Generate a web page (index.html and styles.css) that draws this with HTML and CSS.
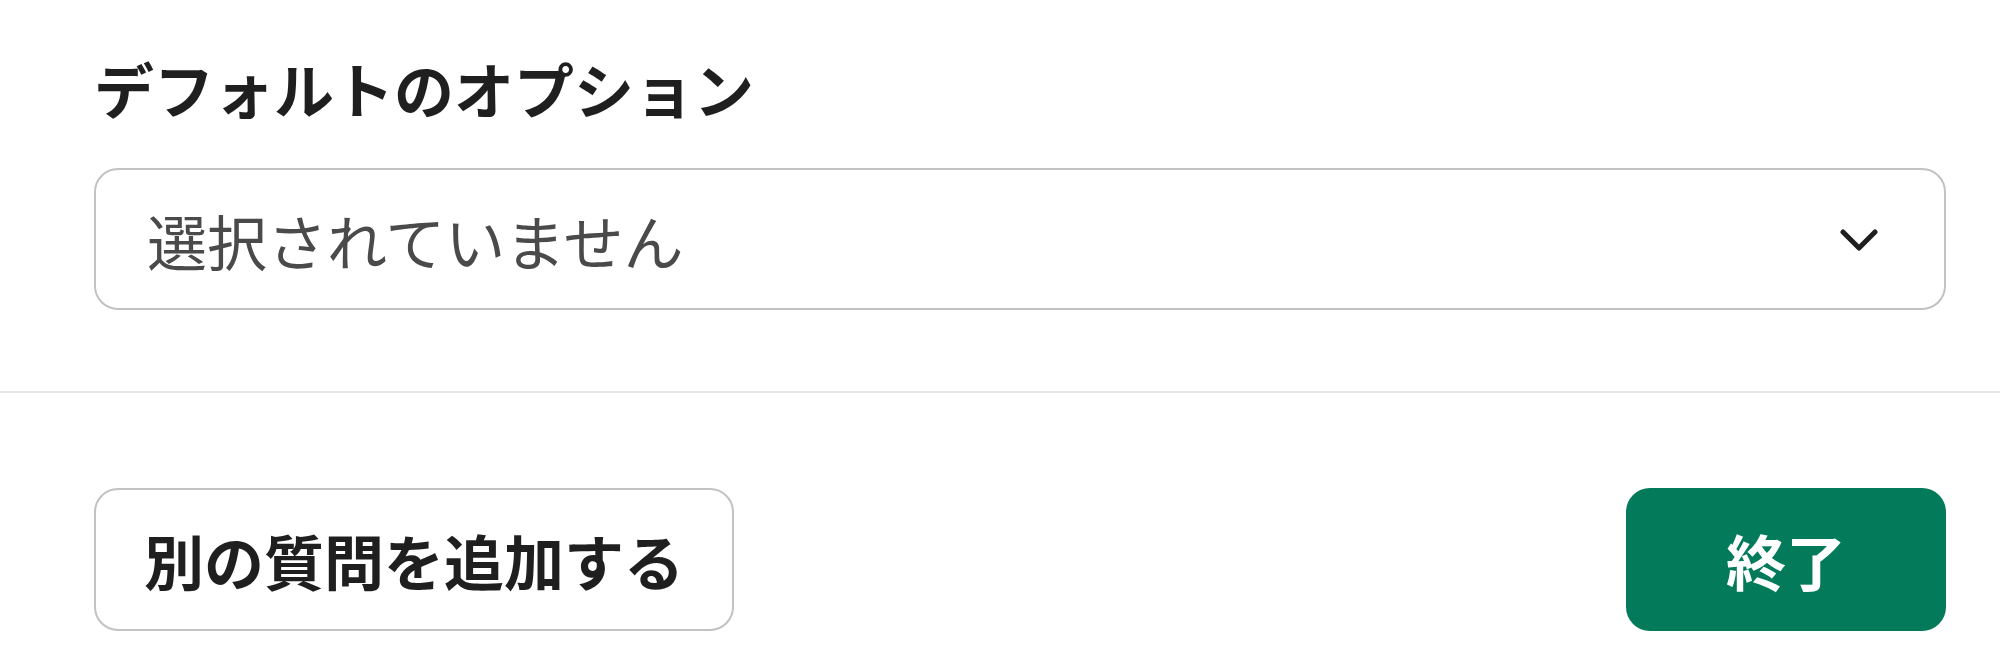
FILE: index.html
```html
<!DOCTYPE html>
<html lang="ja">
<head>
<meta charset="utf-8">
<title>デフォルトのオプション</title>
<link rel="stylesheet" href="styles.css">
</head>
<body>
  <section class="field">
    <div class="field-label">デフォルトのオプション</div>
    <div class="select">
      <span class="select-placeholder">選択されていません</span>
      <svg class="chevron" width="38" height="24" viewBox="0 0 38 24" aria-hidden="true">
        <path d="M3 4 L19 20 L35 4" fill="none" stroke="#1f1f1f" stroke-width="5" stroke-linecap="round" stroke-linejoin="round"/>
      </svg>
    </div>
  </section>
  <hr class="divider">
  <footer class="actions">
    <button class="btn btn-secondary" type="button">別の質問を追加する</button>
    <button class="btn btn-primary" type="button">終了</button>
  </footer>
</body>
</html>
```
FILE: styles.css
```css
html, body {
  margin: 0;
  padding: 0;
  background: #ffffff;
}

body {
  font-family: "Noto Sans CJK JP", "Noto Sans", sans-serif;
  color: #1f1f1f;
  width: 2000px;
  height: 671px;
  overflow: hidden;
}

.field {
  padding: 43px 54px 0 94px;
}

.field-label {
  font-size: 60px;
  line-height: 90px;
  font-weight: 700;
  color: #1f1f1f;
  margin-bottom: 35px;
}

.select {
  box-sizing: border-box;
  height: 142px;
  border: 2px solid #c2c2c2;
  border-radius: 24px;
  display: flex;
  align-items: center;
  justify-content: space-between;
  padding: 2px 66px 0 51px;
}

.select-placeholder {
  font-size: 60px;
  line-height: 1;
  color: #4a4a4a;
}

.chevron {
  display: block;
  flex: none;
}

.divider {
  margin: 81px 0 0 0;
  border: 0;
  border-top: 2px solid #e6e6e6;
  height: 0;
}

.actions {
  display: flex;
  justify-content: space-between;
  align-items: center;
  padding: 95px 54px 0 94px;
}

.btn {
  box-sizing: border-box;
  height: 143px;
  border-radius: 24px;
  font-family: "Noto Sans CJK JP", "Noto Sans", sans-serif;
  font-size: 60px;
  font-weight: 700;
  line-height: 1;
  cursor: pointer;
  display: flex;
  align-items: center;
  justify-content: center;
}

.btn-secondary {
  background: #ffffff;
  color: #1f1f1f;
  border: 2px solid #c2c2c2;
  padding: 0 48px;
}

.btn-primary {
  background: #037b5a;
  color: #ffffff;
  border: 0;
  padding: 0 100px;
}
```
